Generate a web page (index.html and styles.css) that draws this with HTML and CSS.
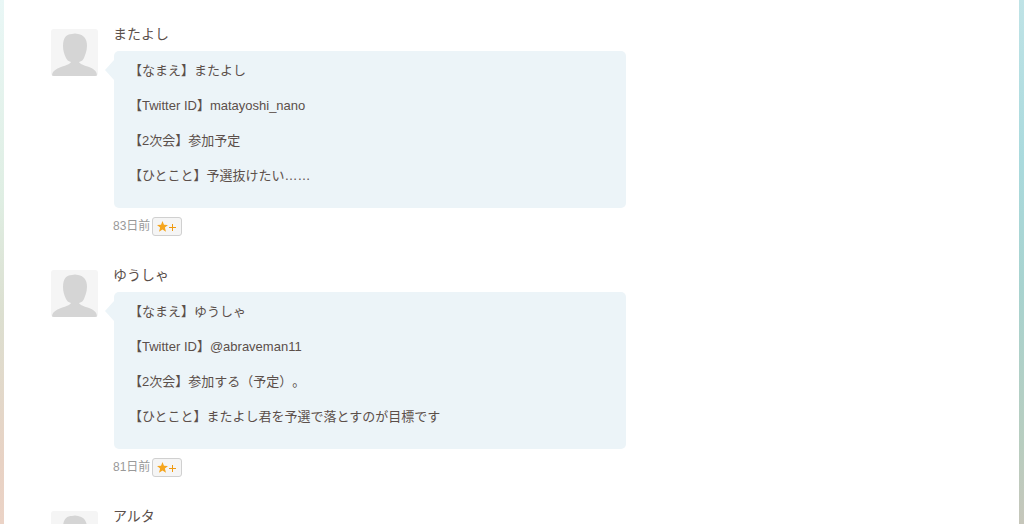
FILE: index.html
```
<!DOCTYPE html>
<html lang="ja">
<head>
  <meta charset="UTF-8">
  <meta name="viewport" content="width=device-width, initial-scale=1.0">
  <title>コメント</title>
  <link rel="stylesheet" href="styles.css">
</head>
<body>
  <svg class="defs" width="0" height="0" aria-hidden="true">
    <symbol id="person" viewBox="0 0 47 47">
      <path d="M1 47C1 42 5 40 10 38C16 36 19 35 20 33C17 32 16 31 15 29C13 25 12 21 12 17C12 9 15 5 21 5Q24 4 27 5C33 6 36 10 36 17C36 22 34 26 33 29C32 31 31 32 28 33C29 35 32 36 38 38C43 40 46 42 46 47Z" fill="#d5d5d5"/>
    </symbol>
    <symbol id="star" viewBox="0 0 12 12">
      <path d="M6 0L7.6 4.1L12 4.4L8.6 7.2L9.8 11.7L6 9.2L2.2 11.7L3.4 7.2L0 4.4L4.4 4.1Z" fill="#f5a51d"/>
    </symbol>
    <symbol id="plus" viewBox="0 0 8 8">
      <path d="M3.5 1V8M0 4.5H7" stroke="#f09a10" fill="none"/>
    </symbol>
  </svg>
  <main class="page">
    <ul class="comments">
      <li class="comment">
        <svg class="avatar"><use href="#person"/></svg>
        <div class="comment-main">
          <div class="username">またよし</div>
          <div class="bubble">
            <p>【なまえ】またよし</p>
            <p>【Twitter ID】matayoshi_nano</p>
            <p>【2次会】参加予定</p>
            <p>【ひとこと】予選抜けたい……</p>
          </div>
          <div class="meta">
            <span>83日前</span>
            <button class="star-button" type="button" aria-label="スターをつける">
              <svg class="star"><use href="#star"/></svg>
              <svg class="plus"><use href="#plus"/></svg>
            </button>
          </div>
        </div>
      </li>
      <li class="comment">
        <svg class="avatar"><use href="#person"/></svg>
        <div class="comment-main">
          <div class="username">ゆうしゃ</div>
          <div class="bubble">
            <p>【なまえ】ゆうしゃ</p>
            <p>【Twitter ID】@abraveman11</p>
            <p>【2次会】参加する（予定）。</p>
            <p>【ひとこと】またよし君を予選で落とすのが目標です</p>
          </div>
          <div class="meta">
            <span>81日前</span>
            <button class="star-button" type="button" aria-label="スターをつける">
              <svg class="star"><use href="#star"/></svg>
              <svg class="plus"><use href="#plus"/></svg>
            </button>
          </div>
        </div>
      </li>
      <li class="comment">
        <svg class="avatar"><use href="#person"/></svg>
        <div class="comment-main">
          <div class="username">アルタ</div>
        </div>
      </li>
    </ul>
  </main>
</body>
</html>
```
FILE: styles.css
```
* {
  box-sizing: border-box;
}
body {
  margin: 0;
  height: 100vh;
  overflow: hidden;
  font-family: "Liberation Sans", "Noto Sans CJK JP", sans-serif;
  font-size: 13px;
  text-spacing-trim: space-all;
  color: #5b4f4a;
  background-image:
    linear-gradient(#e9f7f6, #dfeee3 38%, #dcdfd0 60%, #e8d2c4 88%, #ebd3c6),
    linear-gradient(#bfe3e6, #aadadd 30%, #a8d3cf 55%, #b8cdbf 85%, #c6c6ba);
  background-position: left, right;
  background-size: 50% 100%;
  background-repeat: no-repeat;
}
.defs {
  position: absolute;
}
.page {
  min-height: 100vh;
  margin: 0 5px 0 4px;
  padding: 24px 46px;
  background-color: #fff;
}
.comments {
  margin: 0;
  padding: 0;
  list-style: none;
}
.comment {
  display: flex;
  gap: 15px;
  margin-bottom: 29px;
}
.comment:last-child {
  margin-bottom: 0;
}
.avatar {
  flex: none;
  width: 47px;
  height: 47px;
  margin: 5px 0 0 1px;
  border-radius: 3px;
  background-color: #f5f5f5;
}
.comment-main {
  flex: 1;
  max-width: 513px;
}
.username {
  height: 27px;
  font-size: 14px;
  line-height: 20px;
}
.bubble {
  position: relative;
  margin-left: 1px;
  padding: 10px 15px 22px;
  border-radius: 5px;
  background-color: #ecf4f8;
}
.bubble::before {
  content: "";
  position: absolute;
  top: 9px;
  left: -9px;
  border: solid transparent;
  border-width: 10px 9px 10px 0;
  border-right-color: #ecf4f8;
}
.bubble p {
  margin: 0;
  line-height: 20px;
}
.bubble p + p {
  margin-top: 15px;
}
.meta {
  display: flex;
  gap: 2px;
  margin-top: 9px;
  font-size: 12px;
  line-height: 19px;
  color: #999;
}
.star-button {
  display: flex;
  align-items: center;
  gap: 1px;
  width: 30px;
  height: 19px;
  padding: 0 4px;
  border: 1px solid #d0d0d0;
  border-radius: 3px;
  background-color: #f5f5f5;
  cursor: pointer;
}
.star-button:hover {
  background-color: #fff;
}
.star {
  width: 11px;
  height: 11px;
}
.plus {
  width: 8px;
  height: 8px;
}
```
